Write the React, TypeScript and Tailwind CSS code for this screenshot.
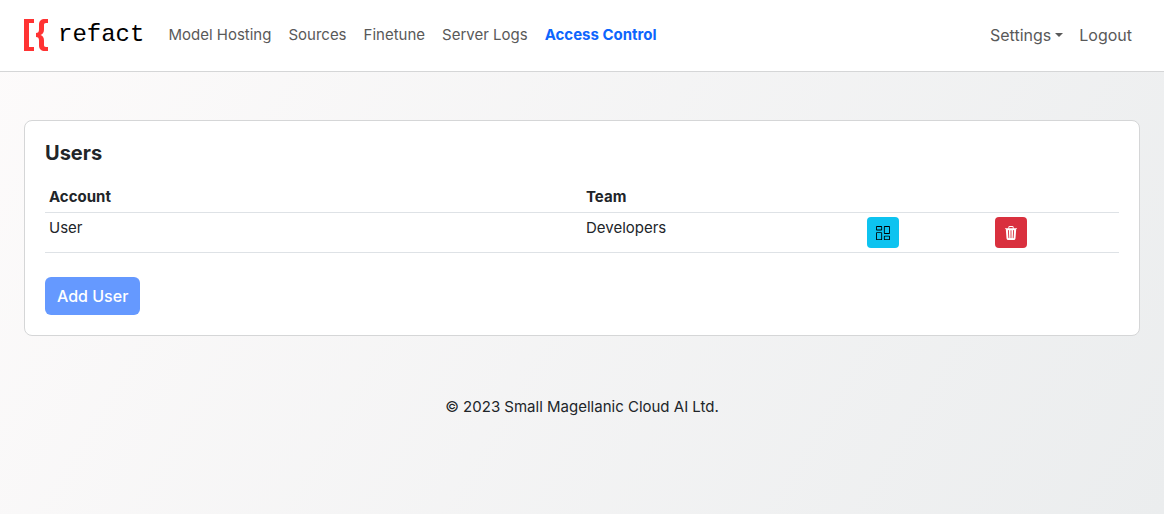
import { BsColumnsGap, BsTrash3Fill } from "react-icons/bs";

const links = ["Model Hosting", "Sources", "Finetune", "Server Logs"];
const users = [{ account: "User", team: "Developers" }];

function Logo() {
  return (
    <a href="#" aria-label="refact" className="flex items-center gap-2.5">
      <svg viewBox="0 0 24 32" className="h-8 w-6" fill="#ff3333" aria-hidden="true">
        <path d="M0 0H10V4H5V28H10V32H0Z" />
        <path d="M24 0V4H22C20.5 4 20 4.7 20 6V10.5C20 13.5 18.8 15.2 16.5 16C18.8 16.8 20 18.5 20 21.5V26C20 27.3 20.5 28 22 28H24V32H21C17 32 15 30 15 26.5V21.5C15 19 14 18 12 18V14C14 14 15 13 15 10.5V5.5C15 2 17 0 21 0Z" />
      </svg>
      <span className="font-['Liberation_Mono',monospace] text-2xl leading-8 text-black">
        refact
      </span>
    </a>
  );
}

function Header() {
  return (
    <header className="flex items-center justify-between border-b border-[#d5d6d7] bg-white px-6 pt-[19px] pb-5">
      <nav className="flex items-center gap-6" aria-label="Main">
        <Logo />
        <ul className="flex items-center gap-[17px] text-[#595959]">
          {links.map((label) => (
            <li key={label}>
              <a href="#">{label}</a>
            </li>
          ))}
          <li>
            <a href="#" aria-current="page" className="font-bold text-[#0d65fd]">
              Access Control
            </a>
          </li>
        </ul>
      </nav>
      <div className="flex items-center gap-4 pr-2 text-base text-[#595959]">
        <button type="button" className="flex items-center gap-1">
          Settings
          <svg viewBox="0 0 8 4" className="h-1 w-2" fill="currentColor" aria-hidden="true">
            <path d="M0 0H8L4 4Z" />
          </svg>
        </button>
        <a href="#">Logout</a>
      </div>
    </header>
  );
}

export default function App() {
  return (
    <div className="min-h-screen bg-[linear-gradient(120deg,#fdfbfb_0%,#ebedee_100%)] font-['Inter',sans-serif] text-[15px] leading-6 text-[#212529]">
      <Header />
      <main className="px-6 pt-12">
        <section className="rounded-lg border border-[#d5d6d7] bg-white p-5">
          <h1 className="mb-2 text-xl leading-6 font-bold">Users</h1>
          <table className="w-full table-fixed border-collapse text-left">
            <thead>
              <tr className="border-b border-[#dee2e6]">
                <th className="w-1/2 px-1 pt-3 pb-[3px] font-bold">Account</th>
                <th className="px-1 pt-3 pb-[3px] font-bold">Team</th>
                <th className="w-32" aria-label="Edit" />
                <th className="w-32" aria-label="Delete" />
              </tr>
            </thead>
            <tbody>
              {users.map((user) => (
                <tr key={user.account} className="border-b border-[#dee2e6] align-top">
                  <td className="px-1 pt-[3px]">{user.account}</td>
                  <td className="px-1 pt-[3px]">{user.team}</td>
                  <td className="p-1">
                    <button
                      type="button"
                      aria-label="Edit user"
                      className="flex h-[31px] w-8 items-center justify-center rounded bg-[#0dc3f0] text-black"
                    >
                      <BsColumnsGap size={14} />
                    </button>
                  </td>
                  <td className="p-1">
                    <button
                      type="button"
                      aria-label="Delete user"
                      className="flex h-[31px] w-8 items-center justify-center rounded bg-[#d9303e] text-white"
                    >
                      <BsTrash3Fill size={14} />
                    </button>
                  </td>
                </tr>
              ))}
            </tbody>
          </table>
          <button
            type="button"
            className="mt-6 rounded-md bg-[#6599ff] px-3 py-[7px] text-base font-medium text-white"
          >
            Add User
          </button>
        </section>
      </main>
      <footer className="px-6 pt-[59px] text-center">© 2023 Small Magellanic Cloud AI Ltd.</footer>
    </div>
  );
}
